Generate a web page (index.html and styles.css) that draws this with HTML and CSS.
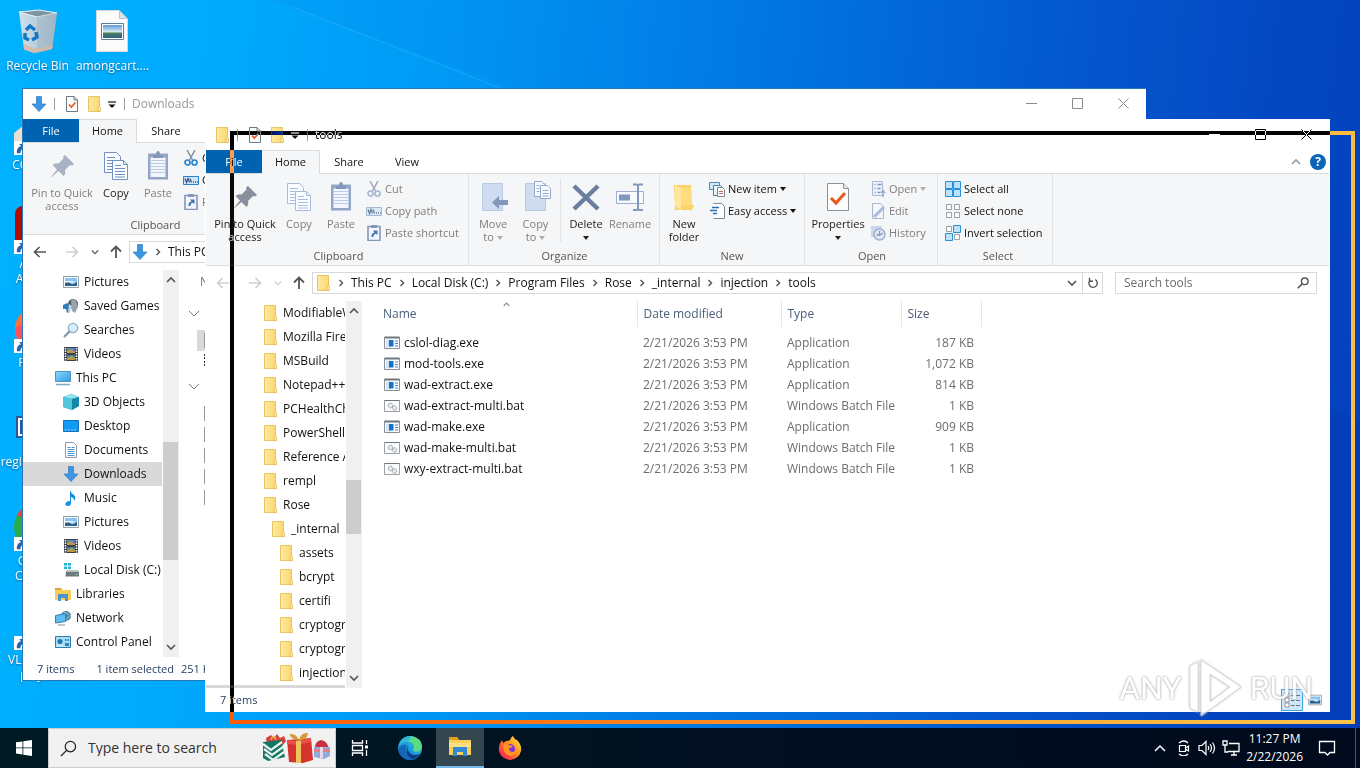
FILE: index.html
```html
<!DOCTYPE html>
<html lang="en">
<head>
<meta charset="utf-8">
<title>Desktop</title>
<link rel="stylesheet" href="styles.css">
</head>
<body>
<svg class="defs" aria-hidden="true">
  <defs>
    <linearGradient id="gFolder" x1="0" x2="1"><stop offset="0" stop-color="#ffe9a2"/><stop offset="1" stop-color="#fbd96f"/></linearGradient>
    <linearGradient id="gBin" x1="0" x2="1"><stop offset="0" stop-color="#cfe0ea"/><stop offset=".6" stop-color="#b3c8d6"/><stop offset="1" stop-color="#8ea6b8"/></linearGradient>
    <linearGradient id="gPic" x1="0" y1="0" x2="0" y2="1"><stop offset="0" stop-color="#5f9bd8"/><stop offset=".55" stop-color="#dcecf5"/><stop offset=".6" stop-color="#4d7f5c"/><stop offset="1" stop-color="#2d5f83"/></linearGradient>
    <linearGradient id="gScreen" x1="0" y1="0" x2="1" y2="1"><stop offset="0" stop-color="#8fd7fb"/><stop offset="1" stop-color="#2b9be8"/></linearGradient>
    <linearGradient id="gEdge" x1="0" y1="1" x2="1" y2="0"><stop offset="0" stop-color="#0c59a4"/><stop offset=".5" stop-color="#1b9de2"/><stop offset="1" stop-color="#5fe07a"/></linearGradient>
    <linearGradient id="gFox" x1="1" y1="0" x2="0" y2="1"><stop offset="0" stop-color="#fff14a"/><stop offset=".4" stop-color="#ff9a1f"/><stop offset=".75" stop-color="#ff3d45"/><stop offset="1" stop-color="#e3128a"/></linearGradient>
  </defs>
  <symbol id="folder" viewBox="0 0 16 16"><path d="M2.5.5h11v15h-11z" fill="url(#gFolder)" stroke="#e6c562"/><path d="M12 11.500l1.500-1 1 1v4H12z" fill="#fdeaa8" stroke="#dcb448" stroke-width=".7"/></symbol>
  <symbol id="checkdoc" viewBox="0 0 16 16"><path d="M2.500.5h7.500l3.500 3.500v11.500h-11z" fill="#fbfbfb" stroke="#6d7785"/><path d="M10 .5v3.500h3.500" fill="none" stroke="#6d7785"/><path d="M5 8.500l2.300 2.700L11.500 6.500" fill="none" stroke="#e8642c" stroke-width="1.800"/></symbol>
  <symbol id="down" viewBox="0 0 16 16"><path d="M5.500.5h5v7.500h4.500L8 15.500 1 8h4.500z" fill="#3d96e3" stroke="#3079bd" stroke-width=".7"/></symbol>
  <symbol id="qat" viewBox="0 0 10 10"><path d="M1 3h8" stroke="#111" stroke-width="1.200"/><path d="M1.500 5.500h7L5 9z" fill="#111"/></symbol>
  <symbol id="min" viewBox="0 0 11 11"><path d="M0 5.500h11" stroke="currentColor"/></symbol>
  <symbol id="max" viewBox="0 0 11 11"><path d="M.5.5h10v10H.5z" fill="none" stroke="currentColor"/></symbol>
  <symbol id="close" viewBox="0 0 11 11"><path d="M.5.500l10 10M10.500.5l-10 10" fill="none" stroke="currentColor"/></symbol>
  <symbol id="pin" viewBox="0 0 32 32"><path d="M19 5l9 9-2 1.500-2-.5-5 5q1 4-1.500 6L12.500 21 5 27.500 4.500 27.500 11 19.500 6.500 15q3-2.500 6-1.500l5-5-.5-2z" fill="currentColor"/></symbol>
  <symbol id="copy" viewBox="0 0 32 32"><path d="M4.500 2.500h12l4 4v16h-16z" fill="#fbfcff" stroke="currentColor"/><path d="M7 7.500h8M7 10.500h9M7 13.500h5M7 16.500h5M7 19.500h5" stroke="currentColor"/><path d="M12.500 10.500h11l4 4v15h-15z" fill="#fbfcff" stroke="currentColor"/><path d="M23.500 10.500v4h4M15 15.500h6M15 18.500h10M15 21.500h10M15 24.500h10M15 27h10" fill="none" stroke="currentColor"/></symbol>
  <symbol id="paste" viewBox="0 0 32 32"><path d="M6 3.500h20v26H6z" fill="#93a6c8"/><path d="M8.500 7.500h15v19.500h-15z" fill="#f3f6fc"/><path d="M11 5h3q0-4 2-4t2 4h3v3H11z" fill="#8497b8"/><path d="M8.500 10.500h15M8.500 13.500h15M8.500 16.500h15M8.500 19.500h15M8.500 22.500h15" stroke="#bccbe4"/></symbol>
  <symbol id="cut" viewBox="0 0 16 16"><path d="M4 0l5.500 10M12 0L6.500 10" stroke="#8390a3" stroke-width="1.500"/><circle cx="4.500" cy="12.500" r="2.500" fill="none" stroke="currentColor" stroke-width="1.700"/><circle cx="11.500" cy="12.500" r="2.500" fill="none" stroke="currentColor" stroke-width="1.700"/></symbol>
  <symbol id="path" viewBox="0 0 16 16"><path d="M.5 4.500h15v8H.5z" fill="#d3e5f5" stroke="currentColor"/><path d="M2 6.500l1.500 4 1.500-4 1.500 4M7 6.500l1.500 4" fill="none" stroke="#30527d" stroke-width="1.200"/><path d="M10 10h1M12 10h1M14 10h.8" stroke="#30527d" stroke-width="1.300"/></symbol>
  <symbol id="pshort" viewBox="0 0 16 16"><path d="M2 1.500h12v14H2z" fill="#f3f6fc" stroke="#8497b8" stroke-width="1.600"/><path d="M5 0h6v3H5z" fill="#8497b8"/><path d="M5.500 12q-.5-4 3-4.500l-1.500-2h4.500V10L10 8.800Q7.500 9 7.300 12z" fill="#4573ad"/></symbol>
  <symbol id="moveto" viewBox="0 0 32 32"><path d="M5.500 2.500h20v27h-20z" fill="#cfdcf0" stroke="#b9cae6"/><path d="M15 21.500l7-6.500v4h9v5h-9v4z" fill="#8297b9"/></symbol>
  <symbol id="copyto" viewBox="0 0 32 32"><path d="M5.500 2.500h20v27h-20z" fill="#cfdcf0" stroke="#b9cae6"/><path d="M14.500.5h7l3 3v12h-10z" fill="#f8faff" stroke="#93a7cb"/><path d="M20.500 4.500h7l3 3v10h-10z" fill="#f8faff" stroke="#93a7cb"/><path d="M22.500 9.500h6M22.500 12.500h6M22.500 15h6M16.500 4.500h3M16.500 7.500h3M16.500 10.500h3" stroke="#93a7cb"/></symbol>
  <symbol id="del" viewBox="0 0 32 32"><path d="M4 5l24 23M28 5L4 28" stroke="#6a7f9f" stroke-width="4.500"/></symbol>
  <symbol id="rename" viewBox="0 0 32 32"><path d="M2.500 10.500h27v12h-27z" fill="#f6f9fe" stroke="#9bafd0"/><path d="M5 13.500h11v6H5z" fill="#8197bc"/><path d="M19 3.500h3.500q1.500 0 1.500 2v22q0 1.500-1.500 1.500H19M29 3.500h-3.500q-1.500 0-1.500 2v22q0 1.500 1.500 1.500H29" fill="none" stroke="#8197bc" stroke-width="2"/></symbol>
  <symbol id="newfolder" viewBox="0 0 32 32"><path d="M6 4h17l1 20h2l-2 5H7z" fill="#f9d46a"/><path d="M7 4l6 3v22l-6-4z" fill="#ffe79c"/><path d="M13 7h10v17h-10z" fill="#ffdc7c"/></symbol>
  <symbol id="newitem" viewBox="0 0 16 16"><path d="M.5 1.500h10v7H.5z" fill="#cde9f6" stroke="#4a90b5"/><path d="M4.500 4.500h7l2 2v8h-9z" fill="#e9f3f8" stroke="#4c8296"/><path d="M8.500 6.500h5l2 2v7h-7z" fill="#fff" stroke="#7a8794"/><path d="M10 10.500h4M10 12.500h4" stroke="#c56a5a"/></symbol>
  <symbol id="easy" viewBox="0 0 16 16"><path d="M4.500.5h8l3 3v12h-11" fill="#fdfdfd" stroke="#7b8794"/><path d="M3 4.500h7M1 7.500h7M4 10.500h4" stroke="#2c6fb0" stroke-width="1.500"/></symbol>
  <symbol id="bigcheck" viewBox="0 0 32 32"><path d="M5.500 2.500h16l5 5v22h-21z" fill="#fdfdfd" stroke="#8b929b"/><path d="M21.500 2.500v5h5" fill="#e9ecef" stroke="#8b929b"/><path d="M9 17l5 5 9-10" fill="none" stroke="#e8571c" stroke-width="3"/></symbol>
  <symbol id="open" viewBox="0 0 16 16"><path d="M2.500.5h10v14h-10z" fill="#eef3fa" stroke="#a8b9d3"/><path d="M4.500 3.500h1M7.500 3.500h4M4.500 7.500h1M7.500 7.500h3M4.500 11.500h1M7.500 11.500h3" stroke="#7f95ba" stroke-width="1.500"/><path d="M12 16V12h-2l3-4 3 4h-2v4z" fill="#a2b4d0"/></symbol>
  <symbol id="edit" viewBox="0 0 16 16"><path d="M2.500.5h8l3 3v12h-11z" fill="#f4f7fc" stroke="#a8b5cb"/><path d="M4 14L14 4" stroke="#a9bbd8" stroke-width="3"/></symbol>
  <symbol id="history" viewBox="0 0 16 16"><path d="M1 1h11v11H1z" fill="#c9d7ec"/><circle cx="9.500" cy="9.500" r="5.500" fill="#e3ebf6" stroke="#a0b2cf" stroke-width="1.500"/><path d="M9.500 6v4H6.500M10 10l3-2" fill="none" stroke="#7f94b7" stroke-width="1.300"/></symbol>
  <symbol id="selall" viewBox="0 0 16 16"><path d="M.5.500h7v7h-7zM8.500.500h7v7h-7zM.5 8.500h7v7h-7zM8.500 8.500h7v7h-7z" fill="#bce3fb" stroke="#2b8fd8"/></symbol>
  <symbol id="selnone" viewBox="0 0 16 16"><path d="M1.500 1.500h5v5h-5zM9.500 1.500h5v5h-5zM1.500 9.500h5v5h-5zM9.500 9.500h5v5h-5z" fill="#fff" stroke="#9a9fa6"/></symbol>
  <symbol id="selinv" viewBox="0 0 16 16"><path d="M1.500 1.500h5v5h-5zM9.500 9.500h5v5h-5z" fill="#fff" stroke="#9a9fa6"/><path d="M8.500.500h7v7h-7zM.5 8.500h7v7h-7z" fill="#bce3fb" stroke="#2b8fd8"/></symbol>
  <symbol id="left" viewBox="0 0 16 16"><path d="M14 8H3M7.500 3L2.500 8l5 5" fill="none" stroke="currentColor" stroke-width="1.600"/></symbol>
  <symbol id="right" viewBox="0 0 16 16"><path d="M2 8h11M8.500 3l5 5-5 5" fill="none" stroke="currentColor" stroke-width="1.600"/></symbol>
  <symbol id="up" viewBox="0 0 16 16"><path d="M8 14V3M3 7.500L8 2.500l5 5" fill="none" stroke="currentColor" stroke-width="1.800"/></symbol>
  <symbol id="cdown" viewBox="0 0 10 10"><path d="M1 3l4 4 4-4" fill="none" stroke="currentColor" stroke-width="1.600"/></symbol>
  <symbol id="gdown" viewBox="0 0 12 12"><path d="M1 3l5 5 5-5" fill="none" stroke="currentColor"/></symbol>
  <symbol id="cup" viewBox="0 0 10 10"><path d="M1 7l4-4 4 4" fill="none" stroke="currentColor" stroke-width="1.600"/></symbol>
  <symbol id="cright" viewBox="0 0 10 10"><path d="M3.500 2l3 3-3 3" fill="none" stroke="#5c5c5c" stroke-width="1.500"/></symbol>
  <symbol id="refresh" viewBox="0 0 16 16"><path d="M5 4.500A4.800 4.800 0 1 0 10.500 4M4 2v4h4" fill="none" stroke="#555" stroke-width="1.600"/></symbol>
  <symbol id="mag" viewBox="0 0 16 16"><circle cx="10" cy="6" r="3.800" fill="none" stroke="currentColor" stroke-width="1.600"/><path d="M7.300 8.700L2 14" stroke="currentColor" stroke-width="1.800"/></symbol>
  <symbol id="exe" viewBox="0 0 16 14"><path d="M.5 1.500h15v11H.5z" fill="#fff" stroke="#8a8f96"/><path d="M.5 1.500h15" stroke="#6f7680" stroke-width="2"/><path d="M2 3.500h5v8H2z" fill="#cfe4f5"/><path d="M5 4h4.500v6.500H5z" fill="#1670c4"/><path d="M11 5h3M11 7.500h3M11 10h3" stroke="#3b7fc0"/></symbol>
  <symbol id="bat" viewBox="0 0 16 14"><path d="M.5 1.500h15v11H.5z" fill="#fbfbfb" stroke="#9aa0a8"/><path d="M.5 1.500h15" stroke="#6f7680"/><circle cx="6.500" cy="6.500" r="2.300" fill="#e7eaee" stroke="#8d959f" stroke-dasharray="1.500 .6"/><circle cx="10.500" cy="9" r="2.200" fill="#e7eaee" stroke="#8d959f" stroke-dasharray="1.500 .6"/></symbol>
  <symbol id="pic" viewBox="0 0 16 16"><path d="M.5 2.500h15v11H.5z" fill="#fff" stroke="#8fa1ad"/><path d="M2 4h12v8H2z" fill="#8cc3ef"/><path d="M2 9q3-3 5 0t7-1v4H2z" fill="#2a5f86"/><path d="M2 7h8l2 1.500H2z" fill="#eef6fb"/></symbol>
  <symbol id="games" viewBox="0 0 16 16"><circle cx="10" cy="6" r="5" fill="#4e5f68"/><path d="M8 2q3-2 5 1l2 6-3 6-3-2z" fill="#98a5ac"/><path d="M0 7l4-2 3 2v6l-3 2-1-4H0z" fill="#347cb6"/><path d="M6 6l3 2-2 7H5z" fill="#c6d6de"/></symbol>
  <symbol id="search" viewBox="0 0 16 16"><circle cx="10" cy="6" r="4.700" fill="#d7effc" stroke="#8daec2" stroke-width="1.300"/><path d="M6.500 9.500L1 15" stroke="#8793a0" stroke-width="2.200"/></symbol>
  <symbol id="video" viewBox="0 0 16 16"><path d="M1 1h14v14H1z" fill="#39404a"/><path d="M4 2h8v5H4z" fill="#5b7fc8"/><path d="M4 9h8v5H4z" fill="#4d7d9b"/><path d="M4 5l4-2 4 3v1H4zM4 12l5-2 3 2v2H4z" fill="#b99b45"/><path d="M2.500 2v13M13.500 2v13" stroke="#fff" stroke-width="1.500" stroke-dasharray="1.500 1"/></symbol>
  <symbol id="pc" viewBox="0 0 16 16"><path d="M.5 1.500h15v10H.5z" fill="url(#gScreen)" stroke="#5b8fb2"/><path d="M1 14.500h14" stroke="#83a7bd" stroke-width="1.500"/></symbol>
  <symbol id="cube" viewBox="0 0 16 16"><path d="M0 3l8-3 8 3v9l-7 4-9-3z" fill="#22a2c4"/><path d="M0 3l8-3 8 3-7 2z" fill="#8fe3ee"/><path d="M9 5l7-2v9l-7 4z" fill="#1487ab"/><path d="M0 3l9 2v11l-9-3z" fill="#4fc6db"/></symbol>
  <symbol id="desk" viewBox="0 0 16 16"><path d="M.5 2.500h15v11H.5z" fill="#0f9bf5" stroke="#1272b8"/><path d="M2 12h12" stroke="#8ccffa" stroke-dasharray="2 1"/></symbol>
  <symbol id="docs" viewBox="0 0 16 16"><path d="M2.500.5h8l3 3v12h-11z" fill="#fff" stroke="#8a97a4"/><path d="M4.500 5.500h3M4.500 7.500h7M4.500 9.500h7M4.500 11.500h7M4.500 13.500h7M8.500 5.500h3" stroke="#4a97cf"/></symbol>
  <symbol id="music" viewBox="0 0 16 16"><path d="M7 0q1 3.500 5 6 1 2-.5 5.500 0-3.500-3.500-4.500v6q0 3-3 3t-2.500-2.500T7 11z" fill="#1a8fe0"/></symbol>
  <symbol id="disk" viewBox="0 0 16 16"><path d="M1 1h3v2.500H1zM5 1h3v2.500H5zM1 4.500h3V7H1zM5 4.500h3V7H5z" fill="#23b6d8"/><path d="M3 9.500l2-1.500h9l2 2v4.500H2.500z" fill="#6c7a80"/><path d="M3 10h12l-1-2H5z" fill="#b9c4c9"/><path d="M12.500 12.500h2" stroke="#5df05d"/></symbol>
  <symbol id="lib" viewBox="0 0 16 16"><path d="M0 2h6l1.500 2H16v10H0z" fill="#f9cf55"/><path d="M0 2h6l1 2H0z" fill="#e1a62b"/><path d="M3 8h10v7h-3v-3H6v3H3z" fill="#4c92d6"/></symbol>
  <symbol id="net" viewBox="0 0 16 16"><circle cx="11" cy="6" r="5" fill="#4d83a5"/><path d="M8 1.500l6 3M15.500 5l-5 5" stroke="#a6d0e5"/><path d="M.5 5.500l10-2v8l-10 1.500z" fill="#5cbdf2" stroke="#3482b5"/><path d="M3 15h7" stroke="#75919f"/></symbol>
  <symbol id="cpl" viewBox="0 0 16 16"><path d="M.5 2.500h15v11H.5z" fill="#a9ddf5" stroke="#2e7cae"/><circle cx="5" cy="7.500" r="2.500" fill="#1b78b8"/><path d="M10 5h1.500v2H10zM12.500 5H14v2h-1.500zM10 9h4v3h-4z" fill="#2e86bd"/><path d="M2 12h6" stroke="#f3fafe"/></symbol>
  <symbol id="details" viewBox="0 0 16 16"><path d="M1 1h4v4H1zM1 6h4v4H1zM1 11h4v4H1z" fill="#fff" stroke="#8a7d7d" stroke-width=".8"/><path d="M7 3.500h3.500M12 3.500h4M7 8.500h3.500M12 8.500h4M7 13.500h3.500M12 13.500h4" stroke="#6d6d74"/></symbol>
  <symbol id="shortcut" viewBox="0 0 12 12"><path d="M0 0h12v12H0z" fill="#fff"/><path d="M2.500 10.500q-.5-5 3.500-6L4.500 2.500H10V8L8.500 6.500Q5.500 7 5.500 10.500z" fill="#2a5fae"/></symbol>
</svg>

<main class="screen">
  <section class="desktop" aria-label="Desktop">
    <svg class="beam" viewBox="0 0 1360 728" preserveAspectRatio="none" aria-hidden="true"><path d="M270 0L520 90 L1360 420V0z" fill="#0a6ae0" opacity=".1"/><path d="M290 6L500 88" stroke="#53bdff" opacity=".35"/></svg>
    <div class="icons">
      <div class="shortcut"><span class="art"><svg viewBox="0 0 48 48"><path d="M5 4l20-2 18 3-5 36-18 4-10-4z" fill="url(#gBin)"/><path d="M5 4l20-2 18 3-20 4z" fill="#7f95a3" stroke="#e8f1f6"/><path d="M23 9l20-4-5 36-15 4z" fill="#a7bccb" opacity=".7"/><path d="M10 36l13 5 16-4-1 4-18 4-10-3z" fill="#d9b9a4" opacity=".8"/><path d="M12 22l4-4 5 4M22 24l1 5-5 3M15 32l-4-2 0-5" fill="none" stroke="#1277c9" stroke-width="3.500"/></svg></span><span class="cap">Recycle Bin</span></div>
      <div class="shortcut"><span class="art"><svg viewBox="0 0 48 48"><path d="M7.500 2.500h23l8 8v33h-31z" fill="#fbfbfb" stroke="#d2d8dc"/><path d="M30.500 2.500v8h8z" fill="#dbe2e6" stroke="#b9c3c9"/><path d="M12.500 15.500h22v16h-22z" fill="#fff" stroke="#5f7f98"/><path d="M14 17h19v13H14z" fill="url(#gPic)"/></svg></span><span class="cap">amongcart....</span></div>
      <div class="shortcut c1"><span class="art"><svg viewBox="0 0 48 48"><path d="M0 26l10-8 10 8v12H0z" fill="#e9dfd2"/></svg><svg class="arrow"><use href="#shortcut"/></svg></span><span class="cap">CCleaner</span></div>
      <div class="shortcut c1"><span class="art"><svg viewBox="0 0 48 48"><rect x="1" width="46" height="46" rx="8" fill="#b30b00"/></svg><svg class="arrow"><use href="#shortcut"/></svg></span><span class="cap">Adobe<br>Acrobat</span></div>
      <div class="shortcut c1"><span class="art"><svg viewBox="0 0 48 48"><circle cx="24" cy="24" r="23" fill="#ff7139"/><path d="M1 24Q2 34 10 42l4-20Q2 20 1 24z" fill="#ff4f5e"/></svg><svg class="arrow"><use href="#shortcut"/></svg></span><span class="cap">Firefox</span></div>
      <div class="shortcut c1"><span class="art"><svg viewBox="0 0 48 48"><path d="M8 2h30v43H8z" fill="#fff"/><path d="M2 12h24v22H2z" fill="#2b579a"/><path d="M4 14h20v18H4z" fill="#fff"/><path d="M6 16h16v14H6z" fill="#2b579a"/></svg></span><span class="cap">registeredp...</span></div>
      <div class="shortcut c1"><span class="art"><svg viewBox="0 0 48 48"><circle cx="24" cy="24" r="24" fill="#2da94f"/><path d="M3 12A24 24 0 0 1 45 12L24 24z" fill="#ea4335"/><circle cx="24" cy="24" r="10" fill="#4285f4"/></svg><svg class="arrow"><use href="#shortcut"/></svg></span><span class="cap">Google<br>Chrome</span></div>
      <div class="shortcut c1"><span class="art"><svg viewBox="0 0 48 48"><path d="M20 2h8l14 40H6z" fill="#f48b00"/></svg><svg class="arrow"><use href="#shortcut"/></svg></span><span class="cap">VLC media<br>player</span></div>
    </div>

    <article class="window back">
      <header class="title">
        <svg class="i16"><use href="#down"/></svg><i class="bar"></i>
        <svg class="i16"><use href="#checkdoc"/></svg><svg class="i16 second"><use href="#folder"/></svg><svg class="i10"><use href="#qat"/></svg><i class="bar thin"></i>
        <span class="name">Downloads</span>
        <span class="ctl"><button aria-label="Minimize"><svg><use href="#min"/></svg></button><button aria-label="Maximize"><svg><use href="#max"/></svg></button><button aria-label="Close"><svg><use href="#close"/></svg></button></span>
      </header>
      <nav class="tabs"><button class="file">File</button><button class="tab on">Home</button><button class="tab">Share</button></nav>
      <div class="ribbon">
        <section class="group clip"><div class="tools">
          <button class="big w72 off"><svg class="faint"><use href="#pin"/></svg><span>Pin to Quick<br>access</span></button>
          <button class="big w36"><svg class="copyon"><use href="#copy"/></svg><span>Copy</span></button>
          <button class="big w48 off"><svg><use href="#paste"/></svg><span>Paste</span></button>
          <div class="col"><button class="row"><svg class="blue"><use href="#cut"/></svg>Cut</button><button class="row"><svg class="blue"><use href="#path"/></svg>Copy path</button><button class="row off"><svg><use href="#pshort"/></svg>Paste shortcut</button></div>
        </div><h3>Clipboard</h3></section>
      </div>
      <div class="address">
        <button class="nav" aria-label="Back"><svg><use href="#left"/></svg></button><button class="nav fwd dim" aria-label="Forward"><svg><use href="#right"/></svg></button><button class="recent" aria-label="Recent"><svg><use href="#cdown"/></svg></button><button class="upb" aria-label="Up"><svg><use href="#up"/></svg></button>
        <div class="crumbs"><svg class="i16"><use href="#down"/></svg><svg class="sep"><use href="#cright"/></svg><a href="#">This PC</a></div>
      </div>
      <div class="body">
        <ul class="tree">
          <li class="l2"><svg><use href="#pic"/></svg>Pictures</li>
          <li class="l2"><svg><use href="#games"/></svg>Saved Games</li>
          <li class="l2"><svg><use href="#search"/></svg>Searches</li>
          <li class="l2"><svg><use href="#video"/></svg>Videos</li>
          <li class="l1"><svg><use href="#pc"/></svg>This PC</li>
          <li class="l2"><svg><use href="#cube"/></svg>3D Objects</li>
          <li class="l2"><svg><use href="#desk"/></svg>Desktop</li>
          <li class="l2"><svg><use href="#docs"/></svg>Documents</li>
          <li class="l2 sel"><svg><use href="#down"/></svg>Downloads</li>
          <li class="l2"><svg><use href="#music"/></svg>Music</li>
          <li class="l2"><svg><use href="#pic"/></svg>Pictures</li>
          <li class="l2"><svg><use href="#video"/></svg>Videos</li>
          <li class="l2"><svg><use href="#disk"/></svg>Local Disk (C:)</li>
          <li class="l1"><svg><use href="#lib"/></svg>Libraries</li>
          <li class="l1"><svg><use href="#net"/></svg>Network</li>
          <li class="l1"><svg><use href="#cpl"/></svg>Control Panel</li>
        </ul>
        <div class="scroll"><svg><use href="#cup"/></svg><div class="track"><i class="thumb t1"></i></div><svg><use href="#cdown"/></svg></div>
        <div class="grouped">
          <div class="ghead">Name</div>
          <div class="gline first"><svg><use href="#gdown"/></svg></div>
          <div class="gfile picked"><i></i></div><div class="gfile dark"><i></i></div>
          <div class="gline"><svg><use href="#gdown"/></svg></div>
          <div class="gfile"><i></i></div><div class="gfile"><i></i></div><div class="gfile"><i></i></div><div class="gfile"><i></i></div><div class="gfile"><i></i></div>
        </div>
      </div>
      <footer class="status"><span>7 items</span><span>1 item selected</span><span class="size">251 KB</span></footer>
    </article>

    <article class="window front">
      <header class="title">
        <svg class="i16"><use href="#folder"/></svg><i class="bar"></i>
        <svg class="i16"><use href="#checkdoc"/></svg><svg class="i16 second"><use href="#folder"/></svg><svg class="i10"><use href="#qat"/></svg><i class="bar thin"></i>
        <span class="name">tools</span>
        <span class="ctl"><button aria-label="Minimize"><svg><use href="#min"/></svg></button><button aria-label="Maximize"><svg><use href="#max"/></svg></button><button aria-label="Close"><svg><use href="#close"/></svg></button></span>
      </header>
      <nav class="tabs"><button class="file">File</button><button class="tab on">Home</button><button class="tab">Share</button><button class="tab">View</button><span class="help"><svg class="i10 fold"><use href="#cup"/></svg><button class="q" aria-label="Help">?</button></span></nav>
      <div class="ribbon">
        <section class="group clip"><div class="tools">
          <button class="big w72"><svg class="pinon"><use href="#pin"/></svg><span>Pin to Quick<br>access</span></button>
          <button class="big w36 off"><svg class="copyoff"><use href="#copy"/></svg><span>Copy</span></button>
          <button class="big w48 off"><svg><use href="#paste"/></svg><span>Paste</span></button>
          <div class="col"><button class="row off"><svg class="pale"><use href="#cut"/></svg>Cut</button><button class="row off"><svg class="pale"><use href="#path"/></svg>Copy path</button><button class="row off"><svg><use href="#pshort"/></svg>Paste shortcut</button></div>
        </div><h3>Clipboard</h3></section>
        <section class="group org"><div class="tools">
          <button class="big w46 off"><svg><use href="#moveto"/></svg><span>Move<br>to <i class="tri"></i></span></button>
          <button class="big w39 off"><svg><use href="#copyto"/></svg><span>Copy<br>to <i class="tri"></i></span></button>
          <i class="vsep"></i>
          <button class="big w46"><svg><use href="#del"/></svg><span>Delete<br><i class="tri"></i></span></button>
          <button class="big w42 off"><svg><use href="#rename"/></svg><span>Rename</span></button>
        </div><h3>Organize</h3></section>
        <section class="group new"><div class="tools">
          <button class="big w48"><svg><use href="#newfolder"/></svg><span>New<br>folder</span></button>
          <div class="col"><button class="row"><svg><use href="#newitem"/></svg>New item <i class="tri"></i></button><button class="row"><svg><use href="#easy"/></svg>Easy access <i class="tri"></i></button></div>
        </div><h3>New</h3></section>
        <section class="group opn"><div class="tools">
          <button class="big w60"><svg><use href="#bigcheck"/></svg><span>Properties<br><i class="tri"></i></span></button>
          <div class="col"><button class="row off"><svg><use href="#open"/></svg>Open <i class="tri"></i></button><button class="row off"><svg><use href="#edit"/></svg>Edit</button><button class="row off"><svg><use href="#history"/></svg>History</button></div>
        </div><h3>Open</h3></section>
        <section class="group selg"><div class="tools">
          <div class="col"><button class="row"><svg><use href="#selall"/></svg>Select all</button><button class="row"><svg><use href="#selnone"/></svg>Select none</button><button class="row"><svg><use href="#selinv"/></svg>Invert selection</button></div>
        </div><h3>Select</h3></section>
      </div>
      <div class="address">
        <button class="nav dim" aria-label="Back"><svg><use href="#left"/></svg></button><button class="nav fwd dim" aria-label="Forward"><svg><use href="#right"/></svg></button><button class="recent dim" aria-label="Recent"><svg><use href="#cdown"/></svg></button><button class="upb" aria-label="Up"><svg><use href="#up"/></svg></button>
        <div class="crumbs"><svg class="i16"><use href="#folder"/></svg><svg class="sep"><use href="#cright"/></svg><a href="#">This PC</a><svg class="sep"><use href="#cright"/></svg><a href="#">Local Disk (C:)</a><svg class="sep"><use href="#cright"/></svg><a href="#">Program Files</a><svg class="sep"><use href="#cright"/></svg><a href="#">Rose</a><svg class="sep"><use href="#cright"/></svg><a href="#">_internal</a><svg class="sep"><use href="#cright"/></svg><a href="#">injection</a><svg class="sep"><use href="#cright"/></svg><a href="#">tools</a>
          <button class="drop" aria-label="Previous locations"><svg><use href="#cdown"/></svg></button><button class="reload" aria-label="Refresh"><svg><use href="#refresh"/></svg></button></div>
        <label class="find"><input type="text" placeholder="Search tools" aria-label="Search tools"><svg><use href="#mag"/></svg></label>
      </div>
      <div class="body">
        <ul class="tree cut">
          <li class="l4"><svg><use href="#folder"/></svg>ModifiableWindowsApps</li>
          <li class="l4"><svg><use href="#folder"/></svg>Mozilla Firefox</li>
          <li class="l4"><svg><use href="#folder"/></svg>MSBuild</li>
          <li class="l4"><svg><use href="#folder"/></svg>Notepad++</li>
          <li class="l4"><svg><use href="#folder"/></svg>PCHealthCheck</li>
          <li class="l4"><svg><use href="#folder"/></svg>PowerShell</li>
          <li class="l4"><svg><use href="#folder"/></svg>Reference Assemblies</li>
          <li class="l4"><svg><use href="#folder"/></svg>rempl</li>
          <li class="l4"><svg><use href="#folder"/></svg>Rose</li>
          <li class="l5"><svg><use href="#folder"/></svg>_internal</li>
          <li class="l6"><svg><use href="#folder"/></svg>assets</li>
          <li class="l6"><svg><use href="#folder"/></svg>bcrypt</li>
          <li class="l6"><svg><use href="#folder"/></svg>certifi</li>
          <li class="l6"><svg><use href="#folder"/></svg>cryptography</li>
          <li class="l6"><svg><use href="#folder"/></svg>cryptography</li>
          <li class="l6"><svg><use href="#folder"/></svg>injection</li>
        </ul>
        <div class="scroll"><svg><use href="#cup"/></svg><div class="track"><i class="thumb t2"></i></div><svg><use href="#cdown"/></svg></div>
        <div class="files">
          <table>
            <thead><tr><th class="c-name">Name<svg class="sort"><use href="#cup"/></svg></th><th class="c-date">Date modified</th><th class="c-type">Type</th><th class="c-size">Size</th></tr></thead>
            <tbody>
              <tr><td><svg><use href="#exe"/></svg>cslol-diag.exe</td><td>2/21/2026 3:53 PM</td><td>Application</td><td>187 KB</td></tr>
              <tr><td><svg><use href="#exe"/></svg>mod-tools.exe</td><td>2/21/2026 3:53 PM</td><td>Application</td><td>1,072 KB</td></tr>
              <tr><td><svg><use href="#exe"/></svg>wad-extract.exe</td><td>2/21/2026 3:53 PM</td><td>Application</td><td>814 KB</td></tr>
              <tr><td><svg><use href="#bat"/></svg>wad-extract-multi.bat</td><td>2/21/2026 3:53 PM</td><td>Windows Batch File</td><td>1 KB</td></tr>
              <tr><td><svg><use href="#exe"/></svg>wad-make.exe</td><td>2/21/2026 3:53 PM</td><td>Application</td><td>909 KB</td></tr>
              <tr><td><svg><use href="#bat"/></svg>wad-make-multi.bat</td><td>2/21/2026 3:53 PM</td><td>Windows Batch File</td><td>1 KB</td></tr>
              <tr><td><svg><use href="#bat"/></svg>wxy-extract-multi.bat</td><td>2/21/2026 3:53 PM</td><td>Windows Batch File</td><td>1 KB</td></tr>
            </tbody>
          </table>
        </div>
      </div>
      <footer class="status"><span>7 items</span><span class="views"><button class="v on" aria-label="Details view"><svg><use href="#details"/></svg></button><button class="v" aria-label="Large icons"><svg><use href="#pic"/></svg></button></span></footer>
    </article>

    <div class="outline"></div>
    <div class="mark" aria-hidden="true"><span>ANY</span><svg viewBox="0 0 60 64"><path d="M15 4L55 31 15 60zM24 18L44 31 24 46z" fill="#fff" fill-rule="evenodd" stroke="#d4d4d4"/><path d="M4 10l8-4v50l-8-4z" fill="#fff" stroke="#dadada"/></svg><span>RUN</span></div>
  </section>

  <footer class="taskbar">
    <button class="start" aria-label="Start"><svg viewBox="0 0 16 16"><path d="M0 2.300l6.500-.9v6.100H0zM7.300 1.300L16 0v7.500H7.300zM0 8.300h6.500v6.100L0 13.500zM7.300 8.300H16V16l-8.700-1.300z" fill="#fff"/></svg></button>
    <label class="tsearch"><svg class="tmag" viewBox="0 0 18 18"><circle cx="11" cy="7" r="5.500" fill="none" stroke="#222" stroke-width="1.300"/><path d="M7 11l-6 6" stroke="#222" stroke-width="1.300"/></svg><input type="text" placeholder="Type here to search" aria-label="Type here to search">
      <svg class="gifts" viewBox="0 0 68 32"><path d="M3 6l5-3 3 3 3-4 3 4 4-2 2 5-3 4H4z" fill="#d5413b"/><path d="M8 8q2-7 5 0" fill="none" stroke="#e7b652" stroke-width="1.500"/><path d="M0 10l18-2 4 17-17 4-5-3z" fill="#127765"/><path d="M0 12l8 6 11-8M1 17l8 6 11-8M2 22l8 6 11-8" fill="none" stroke="#e9f4ee" stroke-width="2.200"/><path d="M24 8l24-2 2 22-10 3-14-1z" fill="#d4332e"/><path d="M24 8l11 1 13-3v4l-13 3-11-1z" fill="#e9524a"/><path d="M33 9h5v22h-5z" fill="#f1c35d"/><path d="M36 9Q26 6 27 2q6-1 9 6 2-8 9-7 0 6-9 8z" fill="#d79b3d"/><path d="M52 16q0-7 6-8 7 1 8 10z" fill="#c93040"/><path d="M51 15h16v9l-6 3-10-2z" fill="#92abdc"/><path d="M51 17h16v3H51z" fill="#e0808f"/><path d="M57 15h3v11h-3z" fill="#e8d9e9"/></svg></label>
    <button class="task" aria-label="Task view"><svg class="i18" viewBox="0 0 18 18"><path d="M1.500 1v3h10V1M1.500 17v-3h10v3M1.500 6.500h10v5h-10zM15.500 1v4M15.500 11v6" fill="none" stroke="#fff" stroke-width="1.300"/><path d="M14 6.500h3v3h-3z" fill="#fff"/></svg></button>
    <button class="task" aria-label="Edge"><svg class="i24" viewBox="0 0 24 24"><circle cx="12" cy="12" r="12" fill="url(#gEdge)"/><path d="M.3 13Q2 6 10 6q8 1 7 6-1 3 0 3.500 3 1 6-2Q24 3 13 0 2 0 .3 13z" fill="#2fb8dc"/><path d="M13 0Q24 2 24 11q-1 5-7 4.500Q14 15 16 12q1-6-6-6Q15-2 13 0z" fill="#5bdc84"/><path d="M9 9q-3 6 2 10 5 3 11-1-3 6-10 6Q2 23 .5 14 3 8 9 9z" fill="#1467b8"/><path d="M10 10q-1 8 6 9 3 0 6-1.500-2 4-7 5.500-9-3-5-13z" fill="#0c3f86"/></svg></button>
    <button class="task active" aria-label="File Explorer"><svg class="i24" viewBox="0 0 24 24"><path d="M1 2h8l2 3h12v15H1z" fill="#fbcf5b"/><path d="M1 2h8l2 3H1z" fill="#e59f1f"/><path d="M1 8h22v4H1z" fill="#ffdf83"/><path d="M5 12h14v9h-4v-4H9v4H5z" fill="#3389d4"/></svg></button>
    <button class="task fox" aria-label="Firefox"><svg class="i24" viewBox="0 0 24 24"><path d="M15 0q1 3 4 4 5 5 4 11-2 8-11 9Q3 23 1 15 0 9 4 4l1 3 3-2q3 0 4-1 1-3 3-4z" fill="url(#gFox)"/><circle cx="12" cy="13" r="5" fill="#7a35e0"/><path d="M5 9q4-2 6 0l4 1q-1 2-4 2 0 4 4 4 3-1 3-4 2 6-5 8-8-1-8-11z" fill="#ff9422"/></svg></button>
    <div class="tray">
      <svg class="i12" viewBox="0 0 12 12"><path d="M1 9l5-5 5 5" fill="none" stroke="#fff" stroke-width="1.500"/></svg>
      <svg class="i16" viewBox="0 0 16 16"><path d="M3.500 5.500h6v6h-6zM9.500 8l3-2v5l-3-2M3 3q5-4 9 0M3 14q5 3.500 9 0" fill="none" stroke="#fff" stroke-width="1.200"/></svg>
      <svg class="i18" viewBox="0 0 18 18"><path d="M1 6.500h3l4-4v13l-4-4H1zM10 7q1.500 2 0 4M12 5q3 4 0 8M14.500 3.500q4 5.500 0 11" fill="none" stroke="#fff" stroke-width="1.200"/></svg>
      <svg class="i18" viewBox="0 0 18 18"><path d="M1 2h4v4H1zM3 6v7h3M7 4.500h10v8H6M9 16h6M12 12.500V16" fill="none" stroke="#fff" stroke-width="1.300"/></svg>
      <time class="clock">11:27 PM<br>2/22/2026</time>
      <svg class="i18 note" viewBox="0 0 18 18"><path d="M1.500 2.500h15v11H12L9.500 16 7 13.500H1.500z" fill="none" stroke="#fff" stroke-width="1.300"/></svg>
      <button class="show" aria-label="Show desktop"></button>
    </div>
  </footer>
</main>
</body>
</html>
```
FILE: styles.css
```css
* { box-sizing: border-box; }
body { margin: 0; font: 12px/16px "Open Sans", "Noto Sans", sans-serif; color: #111; }
button { font: inherit; color: inherit; background: none; border: 0; padding: 0; margin: 0; }
input { font: inherit; border: 0; background: none; outline: 0; padding: 0; min-width: 0; flex: 1; }
h3, ul { margin: 0; padding: 0; list-style: none; font-weight: 400; font-size: inherit; }
a { color: inherit; text-decoration: none; }
svg { display: block; flex: none; }
.defs { position: absolute; width: 0; height: 0; }
.i10 { width: 10px; height: 10px; }
.i12 { width: 12px; height: 12px; }
.i16 { width: 16px; height: 16px; }
.i18 { width: 18px; height: 18px; }
.i24 { width: 24px; height: 24px; }

.screen { display: flex; flex-direction: column; height: 100vh; min-height: 700px; overflow: hidden; }
.desktop { position: relative; flex: 1; isolation: isolate; overflow: hidden;
  background: linear-gradient(96deg, #00b2ff 0%, #00a8fc 18%, #0094f2 36%, #0074e0 56%, #0454cc 76%, #0344be 90%, #033cb6 100%); }
.beam { position: absolute; inset: 0; width: 100%; height: 100%; }

.icons { position: absolute; left: 0; top: 0; display: grid; grid-template-columns: 75px 75px; grid-auto-rows: 99px; }
.c1 { grid-column: 1; }
.shortcut { display: flex; flex-direction: column; align-items: center; padding-top: 8px; color: #fff; }
.art { position: relative; width: 48px; height: 48px; }
.art svg { width: 48px; height: 48px; }
.art .arrow { position: absolute; left: 0; bottom: 0; width: 14px; height: 14px; }
.cap { line-height: 15px; margin-top: 2px; text-align: center; white-space: nowrap; text-shadow: 0 1px 2px rgba(0, 40, 90, .6); }

.window { position: absolute; display: flex; flex-direction: column; background: #fff; }
.back { left: 22px; top: 88px; right: 214px; bottom: 47px; border: 1px solid #2a76b4; border-right: 0; }
.front { left: 205px; top: 119px; right: 30px; bottom: 16px; border: 1px solid #fff; }
.title { display: flex; align-items: center; height: 30px; padding-left: 8px; }
.bar { width: 1px; height: 12px; background: #9a9a9a; margin: 0 9px 0 7px; }
.thin { margin: 0 7px 0 7px; }
.second { margin-left: 6px; margin-right: 5px; }
.back .name { color: #999; }
.ctl { margin-left: auto; display: flex; color: #000; }
.back .ctl { color: #8b8b8b; }
.ctl button { width: 46px; height: 30px; padding-bottom: 2px; display: grid; place-items: center; }
.ctl svg { width: 11px; height: 11px; }

.tabs { display: flex; height: 24px; border-bottom: 1px solid #dadbdc; font-size: 11px; }
.file { width: 56px; height: 23px; background: #0063b1; color: #fff; }
.tab { width: 58px; height: 23px; }
.on.tab { height: 24px; padding-bottom: 1px; background: #f5f6f7; border: 1px solid #dadbdc; border-bottom: 0; border-left: 0; }
.help { margin-left: auto; display: flex; align-items: center; gap: 9px; padding-right: 3px; color: #999; }
.q { width: 16px; height: 16px; border-radius: 8px; background: #0a64b8; color: #fff; font-size: 12px; font-weight: 700; line-height: 16px; }

.ribbon { display: flex; height: 92px; background: #f5f6f7; border-bottom: 1px solid #dadbdc; overflow: hidden; white-space: nowrap; font-size: 11px; }
.group { display: flex; flex-direction: column; border-right: 1px solid #e2e3e4; flex: none; }
.clip { width: 263px; padding-left: 3px; }
.org { width: 191px; padding-left: 1px; }
.new { width: 145px; }
.opn { width: 133px; padding-left: 2px; }
.selg { width: 115px; padding-left: 6px; }
.tools { display: flex; height: 73px; }
.group h3 { text-align: center; color: #555; line-height: 18px; }
.big { display: flex; flex-direction: column; align-items: center; justify-content: flex-start; gap: 4px; text-align: center; line-height: 13px; padding-top: 7px; height: 73px; color: #222; }
.big svg { width: 32px; height: 32px; }
.off, .big.off { color: #7e7e7e; }
.w36 { width: 36px; } .w39 { width: 39px; } .w42 { width: 42px; } .w46 { width: 46px; }
.w48 { width: 48px; } .w60 { width: 62px; } .w72 { width: 72px; }
.vsep { width: 1px; margin: 5px 2px 5px 5px; background: #e2e3e4; }
.col { padding: 4px 0 0 1px; }
.row { display: flex; align-items: center; gap: 3px; height: 22px; }
.row svg { width: 16px; height: 16px; }
.tri { display: inline-block; border: 3px solid transparent; border-top: 4px solid currentColor; border-bottom: 0; vertical-align: middle; }
.off .tri { opacity: .6; }
.faint { color: #a9b2c2; } .pinon { color: #87909c; } .copyon { color: #6f91c4; } .copyoff { color: #a9bbdc; }
.blue { color: #2c82c9; } .pale { color: #8fa3c6; opacity: .75; }

.address { display: flex; align-items: center; height: 35px; padding: 0 12px 1px 4px; color: #555; }
.nav { width: 26px; margin-right: 6px; display: grid; place-items: center; }
.fwd { margin-right: 2px; }
.nav svg, .upb svg { width: 16px; height: 16px; }
.recent { width: 16px; display: grid; place-items: center; }
.recent svg { width: 8px; height: 8px; }
.upb { width: 16px; margin: 0 5px; }
.dim { color: #cfcfcf; }
.crumbs { flex: 1; display: flex; align-items: center; height: 22px; border: 1px solid #d9d9d9; padding-left: 2px; color: #111; overflow: hidden; white-space: nowrap; }
.sep { width: 10px; height: 10px; margin: 0 5px; }
.crumbs a { line-height: 20px; }
.drop { margin-left: auto; width: 20px; height: 20px; display: grid; place-items: center; color: #555; }
.drop svg { width: 10px; height: 10px; }
.reload { width: 20px; height: 20px; border-left: 1px solid #d9d9d9; display: grid; place-items: center; }
.reload svg { width: 14px; height: 14px; }
.find { width: 202px; height: 22px; margin-left: 12px; border: 1px solid #d9d9d9; display: flex; align-items: center; padding: 0 6px 0 8px; }
.find svg { width: 14px; height: 14px; }
.find input::placeholder { color: #6d6d6d; opacity: 1; }

.body { flex: 1; min-height: 0; display: flex; }
.tree { width: 139px; overflow: hidden; white-space: nowrap; }
.tree li { display: flex; align-items: center; gap: 5px; height: 24px; }
.tree svg { width: 16px; height: 16px; }
.cut { border-bottom: 3px solid #d9d9d9; }
.l1 { padding-left: 32px; } .l2 { padding-left: 40px; } .l4 { padding-left: 56px; } .l5 { padding-left: 64px; } .l6 { padding-left: 72px; }
.sel { background: #d9d9d9; }
.scroll { width: 16px; margin-left: 1px; background: #f0f0f0; display: flex; flex-direction: column; align-items: center; padding: 5px 0; color: #555; }
.scroll > svg { width: 10px; height: 10px; }
.track { flex: 1; align-self: stretch; position: relative; }
.thumb { position: absolute; left: 0; right: 1px; background: #cdcdcd; }
.t1 { top: 44%; height: 33%; } .t2 { top: 46%; height: 15%; }

.grouped { width: 120px; padding-left: 9px; }
.ghead { padding-left: 12px; line-height: 24px; color: #6d7b8e; }
.gline { height: 28px; margin: 1px 0 2px; display: flex; align-items: center; }
.first { margin-top: 6px; }
.gline svg { width: 12px; height: 12px; color: #777; }
.gfile { height: 21px; margin-left: 9px; padding: 3px 0 3px 7px; }
.gfile i { display: block; width: 14px; height: 15px; border: 1px solid #999; }
.picked { background: #d9d9d9; }
.dark i { height: 12px; border: 2px dotted #333; }

.files { flex: 1; min-width: 0; padding-left: 9px; }
table { border-collapse: collapse; table-layout: fixed; width: 610px; }
th { text-align: left; font-weight: 400; color: #4c607a; height: 26px; padding: 0 6px; border-right: 1px solid #e5e5e5; position: relative; }
thead::after { content: ""; display: block; height: 5px; }
.c-name { width: 266px; padding-left: 12px; } .c-date { width: 144px; } .c-type { width: 120px; } .c-size { width: 80px; }
.sort { position: absolute; left: 131px; top: 0; width: 9px; height: 7px; color: #888; }
td { height: 21px; padding: 0 6px; color: #6d6d6d; white-space: nowrap; line-height: 20px; }
td:first-child { display: flex; align-items: center; gap: 4px; padding-left: 13px; color: #111; }
td:last-child { text-align: right; padding-right: 7px; }
td svg { width: 16px; height: 14px; }

.status { display: flex; align-items: center; height: 23px; padding: 0 6px 0 14px; color: #1e395b; white-space: nowrap; overflow: hidden; font-size: 11px; }
.back .status span + span { margin-left: 22px; }
.back .status .size { margin-left: 7px; }
.views { margin-left: auto; display: flex; align-items: center; gap: 4px; }
.v { width: 16px; height: 22px; display: grid; place-items: center; }
.v svg { width: 14px; height: 14px; }
.v.on { width: 22px; background: #cce8ff; border: 1px solid #3fa7e0; }
.v.on svg { width: 18px; height: 16px; }

.outline { position: absolute; left: 230px; top: 131px; right: 5px; bottom: 4px; border: 4px solid #fff; mix-blend-mode: difference; }
.mark { position: absolute; right: 47px; bottom: 8px; display: flex; align-items: center; gap: 4px; font: 32px/40px "Roboto", sans-serif; color: #fff; opacity: .85; text-shadow: 0 0 2px #999, 0 0 3px #bbb; }
.mark svg { width: 60px; height: 64px; filter: drop-shadow(0 0 1px #aaa); }

.taskbar { height: 40px; display: flex; background: linear-gradient(90deg, #001b24, #010f20 55%, #000a1c); color: #fff; }
.start { width: 48px; display: grid; place-items: center; }
.start svg { width: 16px; height: 16px; }
.tsearch { width: 288px; display: flex; align-items: center; background: #f1f1f1; border: 1px solid #ccc; padding: 0 4px 0 11px; }
.tmag { width: 17px; height: 17px; margin-right: 11px; }
.tsearch input { font-size: 14px; }
.tsearch input::placeholder { color: #333; opacity: 1; }
.gifts { width: 68px; height: 34px; }
.task { width: 48px; margin-right: 1px; display: grid; place-items: center; }
.task + .task { margin-left: 1px; }
.active { background: #34464f; border-bottom: 2px solid #76b9ed; }
.tray { margin-left: auto; display: flex; align-items: center; gap: 6px; }
.tray .i12 { margin-right: 4px; }
.clock { text-align: center; line-height: 18px; margin-right: 2px; }
.note { margin: 0 13px 0 7px; }
.show { align-self: stretch; width: 5px; border-left: 1px solid #4b5665; }
```
